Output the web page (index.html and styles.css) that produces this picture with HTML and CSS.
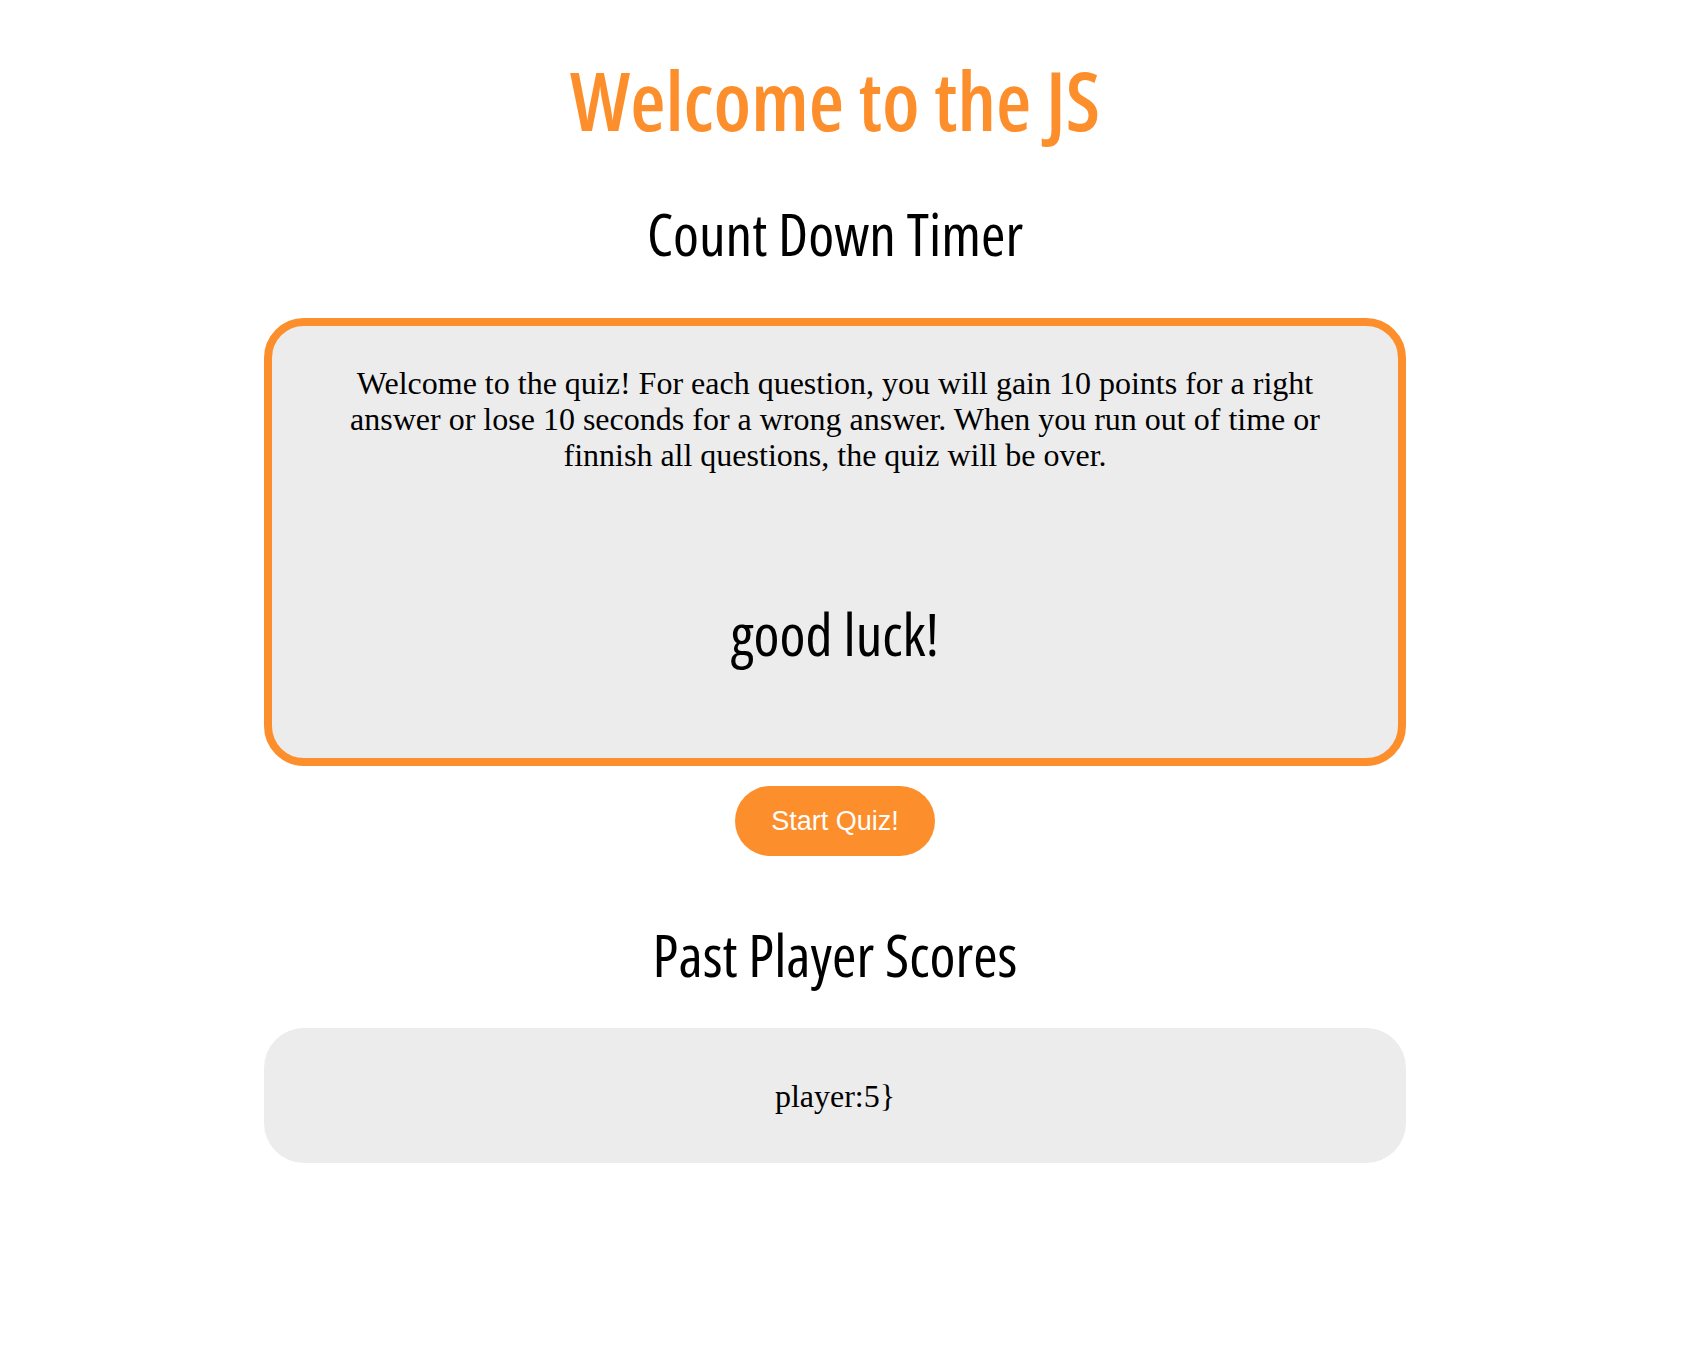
FILE: index.html
```html
<!DOCTYPE html>
<html>
<head>
<meta charset="utf-8">
<title>JS Quiz</title>
<link rel="stylesheet" href="styles.css">
</head>
<body>
<main class="page">
  <h1 class="title">Welcome to the JS</h1>
  <h2 class="heading timer">Count Down Timer</h2>
  <section class="quiz-box">
    <p class="intro">Welcome to the quiz! For each question, you will gain 10 points for a right answer or lose 10 seconds for a wrong answer. When you run out of time or finnish all questions, the quiz will be over.</p>
    <h2 class="heading luck">good luck!</h2>
  </section>
  <div class="actions">
    <button class="start-btn">Start Quiz!</button>
  </div>
  <h2 class="heading scores-title">Past Player Scores</h2>
  <section class="scores-box">
    <p class="score">player:5}</p>
  </section>
</main>
</body>
</html>
```
FILE: styles.css
```css
html, body {
  margin: 0;
  padding: 0;
  background: #ffffff;
}

body {
  padding-right: 32px;
}

.page {
  width: 1142px;
  margin: 0 auto;
  display: flex;
  flex-direction: column;
  align-items: stretch;
  text-align: center;
}

.title {
  margin: 50px 0 0;
  font-family: "Open Sans", "Liberation Sans Narrow", sans-serif;
  font-stretch: 75%;
  font-weight: 600;
  font-size: 81px;
  line-height: 100px;
  color: #fd8e2c;
}

.heading {
  margin: 0;
  font-family: "Open Sans", "Liberation Sans Narrow", sans-serif;
  font-stretch: 75%;
  font-weight: 400;
  font-size: 59px;
  line-height: 70px;
  color: #000000;
}

.timer {
  margin-top: 48px;
}

.quiz-box {
  margin-top: 50px;
  border: 8px solid #fd8e2c;
  border-radius: 40px;
  background: #ececec;
  padding: 39px 50px 90px;
}

.intro {
  margin: 0;
  font-family: "Liberation Serif", "Times New Roman", serif;
  font-size: 32px;
  line-height: 36px;
  color: #000000;
}

.luck {
  margin-top: 125px;
}

.actions {
  margin-top: 20px;
  display: flex;
  justify-content: center;
}

.start-btn {
  width: 200px;
  height: 70px;
  border: none;
  border-radius: 35px;
  background: #fd8e2c;
  color: #ffffff;
  font-family: "Liberation Sans", Arial, sans-serif;
  font-size: 27px;
  padding: 0;
  cursor: pointer;
}

.scores-title {
  margin-top: 63px;
}

.scores-box {
  margin-top: 39px;
  border-radius: 40px;
  background: #ececec;
  padding: 50px 0 49px;
}

.score {
  margin: 0;
  font-family: "Liberation Serif", "Times New Roman", serif;
  font-size: 32px;
  line-height: 36px;
  color: #000000;
}
```
